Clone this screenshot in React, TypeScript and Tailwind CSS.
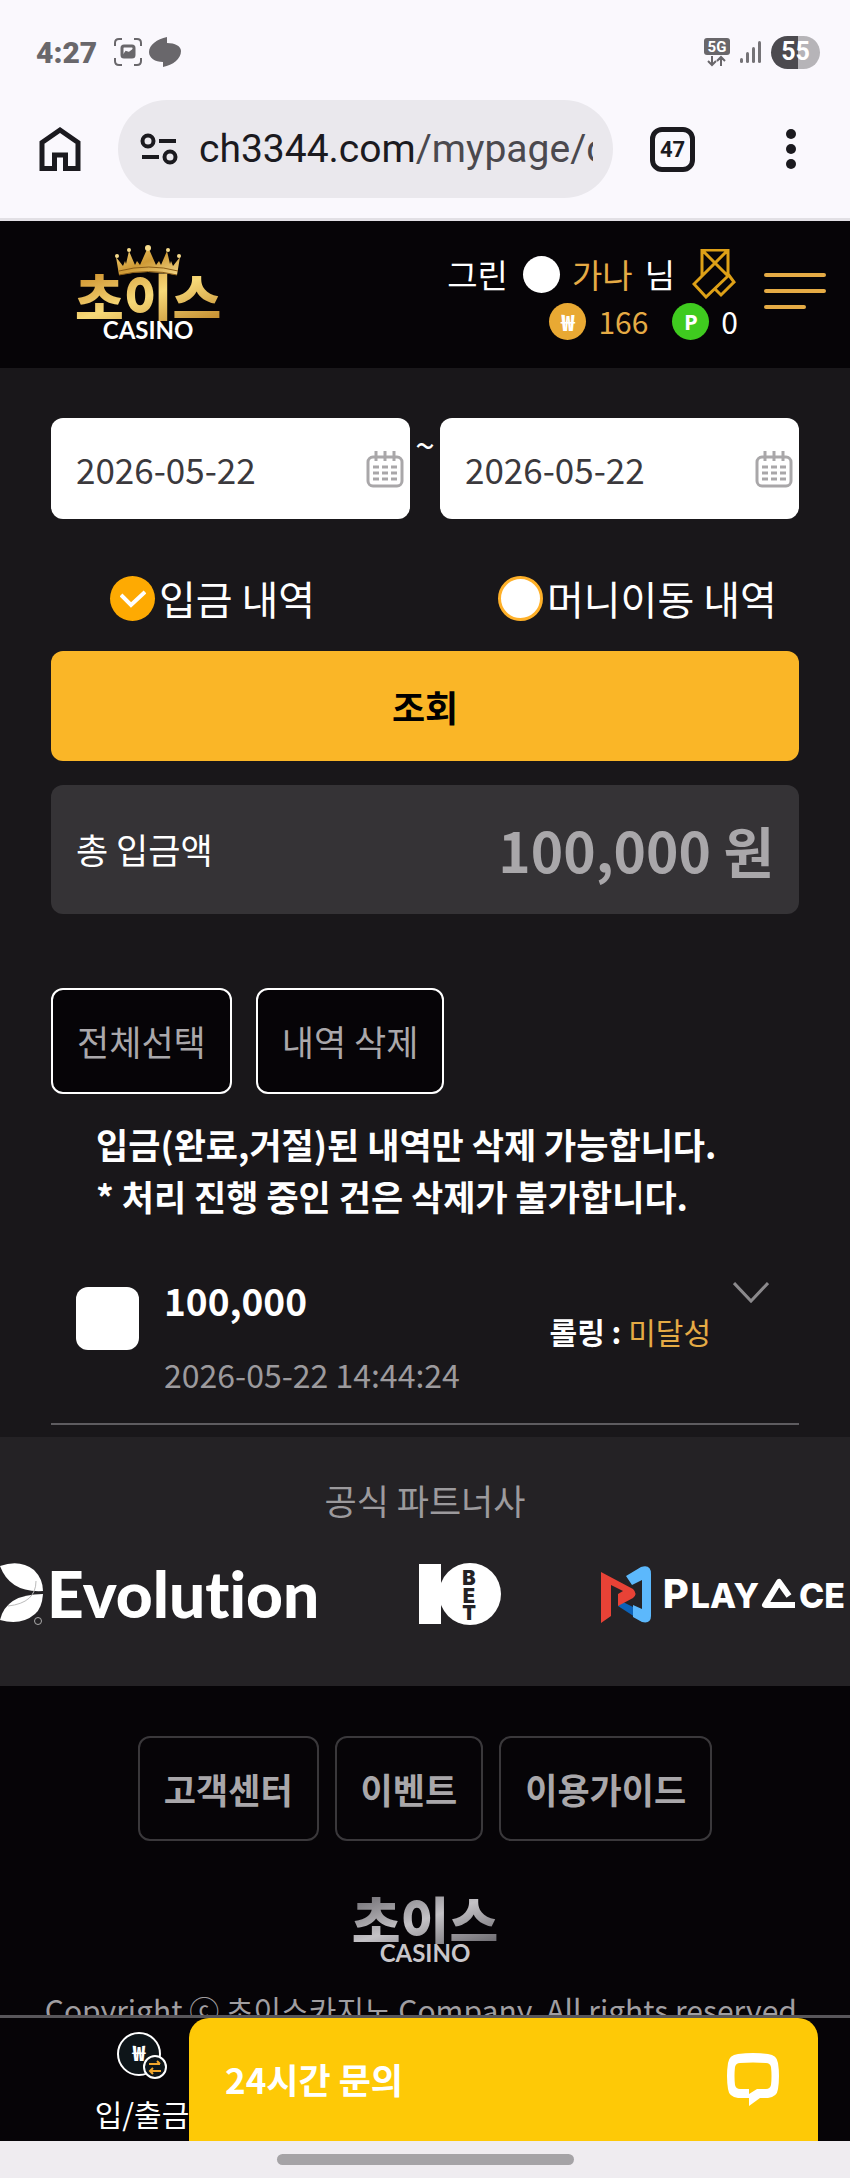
const bars = [5, 11, 16, 22]

function Wordmark({ tone }: { tone: "gold" | "silver" }) {
    const fill = tone === "gold"
        ? "bg-linear-to-br from-[#c98a1e] via-[#f7d978] to-[#c08a2a]"
        : "bg-linear-to-br from-[#6b696e] via-[#c4c2c6] to-[#69676c]"
    return (
        <span className="flex flex-col items-center">
            <span className={`bg-clip-text text-[53px] leading-[50px] font-black text-transparent ${fill}`}>초이스</span>
            <span className={tone === "gold"
                ? "font-[Lato] text-[24px] leading-[18px] font-bold text-white"
                : "font-[Lato] text-[24px] leading-[18px] font-bold text-[#c8c6ca]"}>CASINO</span>
        </span>
    )
}

function Crown() {
    return (
        <svg viewBox="0 0 66 34" className="absolute top-6 left-[115px] h-[34px] w-[66px]" aria-hidden="true">
            <defs>
                <linearGradient id="crown" x1="0" x2="1" y1="0" y2="1">
                    <stop offset="0" stopColor="#f6d67a" />
                    <stop offset=".5" stopColor="#cf9a35" />
                    <stop offset="1" stopColor="#f3d78a" />
                </linearGradient>
            </defs>
            <path d="M4 30 1 12l7 9 2-5 1 3 3-13 6 14 2-4 3 4 8-18 8 18 3-4 2 4 6-14 3 13 1-3 2 5 7-9-3 18q-30-6-58 0z" fill="url(#crown)" />
            <path d="M4 26q30-8 59 0M4 30q30-7 58 0" fill="none" stroke="#8a5c16" strokeWidth="1" />
            <g fill="#f7dc8c">
                <circle cx="2" cy="11" r="2" />
                <circle cx="14" cy="5" r="2" />
                <circle cx="33" cy="3" r="3" />
                <circle cx="53" cy="5" r="2" />
                <circle cx="64" cy="11" r="2" />
            </g>
        </svg>
    )
}

function BrowserChrome() {
    return (
        <div className="border-b-[3px] border-[#e2e0e5] bg-[#faf8fd] font-[Roboto]">
            <div className="flex h-[100px] items-center justify-between pt-1 pr-[30px] pl-9">
                <div className="flex items-center text-[#69676b]">
                    <span className="w-[63px] text-[30px] font-black">4:27</span>
                    <svg viewBox="0 0 28 28" className="ml-[15px] size-7" fill="none" stroke="currentColor" strokeWidth="2">
                        <path d="M1 8V5q0-4 4-4h3M20 1h3q4 0 4 4v3M27 20v3q0 4-4 4h-3M8 27H5q-4 0-4-4v-3" />
                        <rect x="8" y="8" width="12" height="11" rx="2" strokeWidth="3" />
                        <path d="m9 18 3-4 3 1 4-3v6z" fill="currentColor" />
                    </svg>
                    <svg viewBox="0 0 32 30" className="ml-[7px] h-[30px] w-8" fill="currentColor">
                        <path d="M18 0v6c8 0 14 3 14 8 0 8-8 14-18 16v-5C6 25 0 21 0 15 0 8 8 2 18 0z" />
                    </svg>
                </div>
                <div className="flex items-center text-[#69676b]">
                    <svg viewBox="0 0 26 29" className="h-[29px] w-[26px]">
                        <rect width="26" height="17" rx="3" fill="currentColor" />
                        <text x="13" y="14" textAnchor="middle" fontSize="15" fontWeight="700" fill="#fff">5G</text>
                        <path d="M8 18v9m-4-4 4 4 4-4M17 28v-9m-4 4 4-4 4 4" fill="none" stroke="currentColor" strokeWidth="2" />
                    </svg>
                    <div className="ml-[10px] flex h-[22px] items-end gap-[3px]">
                        {bars.map((h) => (
                            <span key={h} className="w-[3px] rounded-full bg-[#757377]" style={{ height: h }} />
                        ))}
                    </div>
                    <div className="ml-[10px] flex h-[33px] w-[49px] items-center justify-center rounded-full bg-linear-to-r from-[#4c4a4f] from-55% to-[#b6b4b8] to-55% text-[25px] font-bold text-white">55</div>
                </div>
            </div>
            <div className="flex items-center pb-5">
                <button className="ml-[39px]" aria-label="홈">
                    <svg viewBox="0 0 42 46" className="h-[46px] w-[42px]" fill="none" stroke="#1b1a1f" strokeWidth="5">
                        <path d="M3 42.500V16.500L21 4l18 12.500v26H26.500V29h-11v13.500z" />
                    </svg>
                </button>
                <div className="ml-[37px] flex h-[98px] min-w-0 flex-1 items-center rounded-full bg-[#eae8ed] pr-5 pl-[22px]">
                    <svg viewBox="0 0 38 32" className="h-8 w-[38px] shrink-0" fill="none" stroke="#1b1a1f" strokeWidth="4">
                        <circle cx="8" cy="8" r="5.500" />
                        <path d="M19 8h17M2 24h17" />
                        <circle cx="30" cy="24" r="5.500" />
                    </svg>
                    <span className="ml-[21px] min-w-0 flex-1 overflow-hidden text-[39px] leading-[52px] whitespace-nowrap text-[#1b1a1f]">
                        ch3344.com<span className="text-[#4b494e]">/mypage/c</span>
                    </span>
                </div>
                <button className="ml-[37px] flex size-[45px] items-center justify-center rounded-xl border-[5px] border-[#1b1a1f] text-[22px] font-bold text-[#1b1a1f]" aria-label="탭 47개">47</button>
                <button className="mr-[54px] ml-[91px] flex flex-col gap-[5px]" aria-label="메뉴">
                    <span className="size-[10px] rounded-full bg-[#1b1a1f]" />
                    <span className="size-[10px] rounded-full bg-[#1b1a1f]" />
                    <span className="size-[10px] rounded-full bg-[#1b1a1f]" />
                </button>
            </div>
        </div>
    )
}

function Header() {
    return (
        <header className="relative flex h-[147px] items-start justify-between bg-[#060407] pr-6 pl-[75px]">
            <a href="#home" className="pt-[50px]"><Wordmark tone="gold" /></a>
            <Crown />
            <div className="flex">
                <div className="flex flex-col items-end pt-7">
                    <div className="flex h-[50px] items-center text-[33px] leading-[50px] text-white">
                        그린
                        <span className="mr-3 ml-[15px] size-[37px] rounded-full bg-white" />
                        <span className="text-[#e5ab45]">가나</span>
                        <span className="ml-3">님</span>
                        <svg viewBox="0 0 44 50" className="ml-[17px] h-[50px] w-11" fill="none" stroke="#dda017" strokeWidth="3">
                            <path d="M10 27V1h26v25M10 1l26 26M36 1 2 35l12 13 22-21M36 25l6 8-13 13-7-7" />
                        </svg>
                    </div>
                    <div className="flex items-center text-[30px] leading-[44px] text-white">
                        <span className="flex size-[37px] items-center justify-center rounded-full bg-[#e9a933] text-[22px] font-black">₩</span>
                        <span className="ml-3 text-[#e5ab45]">166</span>
                        <span className="ml-6 flex size-[37px] items-center justify-center rounded-full bg-[#3fcb1f] font-['Open_Sans'] text-[22px] font-bold">P</span>
                        <span className="mr-[-2px] ml-3">0</span>
                    </div>
                </div>
                <button className="mt-[52px] ml-7 flex w-[62px] flex-col gap-3" aria-label="전체 메뉴">
                    <span className="h-1 w-full rounded-full bg-[#e5ab45]" />
                    <span className="h-1 w-full rounded-full bg-[#e5ab45]" />
                    <span className="h-1 w-[42px] rounded-full bg-[#e5ab45]" />
                </button>
            </div>
        </header>
    )
}

function DateField({ label }: { label: string }) {
    return (
        <label className="flex h-[101px] min-w-0 flex-1 items-center rounded-xl bg-white pr-[6px] pl-[25px]">
            <input aria-label={label} defaultValue="2026-05-22" className="min-w-0 flex-1 text-[35px] leading-[50px] text-[#3b393d] outline-none" />
            <svg viewBox="0 0 38 38" className="size-[38px] shrink-0" fill="none" stroke="#a9a7a9" strokeWidth="3">
                <rect x="2" y="7" width="34" height="29" rx="5" />
                <path d="M10 1v10M19 1v10M28 1v10" />
                <path d="M7 17h6m3 0h6m3 0h6M7 23h6m3 0h6m3 0h6M7 29h6m3 0h6m3 0h6" />
            </svg>
        </label>
    )
}

function History() {
    return (
        <main className="bg-[#19171a] px-[51px] pt-[50px] pb-3">
            <div className="flex">
                <DateField label="시작일" />
                <span className="w-[30px] text-center text-[35px] leading-[52px]">~</span>
                <DateField label="종료일" />
            </div>
            <div className="mt-[50px] grid grid-cols-2 text-[40px] leading-[58px]">
                <label className="flex items-center gap-1 pl-[59px]">
                    <input type="radio" name="kind" defaultChecked className="sr-only" />
                    <span className="flex size-[45px] items-center justify-center rounded-full bg-[#feaa02]">
                        <svg viewBox="0 0 26 20" className="h-5 w-[26px]" fill="none" stroke="#fff" strokeWidth="4">
                            <path d="m1 7 10 10L25 4" />
                        </svg>
                    </span>
                    입금 내역
                </label>
                <label className="flex items-center gap-1 pl-[73px] whitespace-nowrap">
                    <input type="radio" name="kind" className="sr-only" />
                    <span className="size-[45px] rounded-full border-[3px] border-[#feb029] bg-white" />
                    머니이동 내역
                </label>
            </div>
            <button className="mt-6 h-[110px] w-full rounded-xl bg-[#fab627] text-[36px] font-bold text-black">조회</button>
            <div className="mt-6 flex h-[129px] items-center justify-between rounded-xl bg-[#353336] px-[25px]">
                <span className="text-[35px]">총 입금액</span>
                <strong className="text-[55px] font-bold text-[#a9a7aa]">100,000 원</strong>
            </div>
            <div className="mt-[74px] flex gap-6 text-[35px] leading-[50px] text-[#aaa8ab]">
                <button className="h-[106px] rounded-xl border-2 border-white bg-[#060407] px-6">전체선택</button>
                <button className="h-[106px] rounded-xl border-2 border-white bg-[#060407] px-6">내역 삭제</button>
            </div>
            <p className="mt-6 pl-[45px] text-[35px] leading-[52px] font-bold">
                입금(완료,거절)된 내역만 삭제 가능합니다.<br />* 처리 진행 중인 건은 삭제가 불가합니다.
            </p>
            <div className="mt-[50px] flex h-[153px] border-b-2 border-[#5e5c60] pr-[30px] pl-[25px]">
                <input type="checkbox" aria-label="100,000 선택" className="mt-[15px] size-[63px] appearance-none rounded-xl bg-white" />
                <div className="ml-[25px] flex-1">
                    <div className="text-[37px] leading-[56px] font-bold">100,000</div>
                    <time className="block pt-4 text-[32px] leading-[60px] text-[#9c9a9d]">2026-05-22 14:44:24</time>
                </div>
                <div className="pt-9 text-[30px] leading-[46px]">
                    <b>롤링 : </b><span className="text-[#e5ab45]">미달성</span>
                </div>
                <svg viewBox="0 0 36 22" className="mt-[10px] ml-[22px] h-[22px] w-9" fill="none" stroke="#8b898c" strokeWidth="3">
                    <path d="m1 1 17 18L35 1" />
                </svg>
            </div>
        </main>
    )
}

function Partners() {
    return (
        <section className="overflow-hidden bg-[#242225] pt-[38px] pb-[61px]">
            <h2 className="text-center text-[35px] leading-[50px] text-[#9c9a9d]">공식 파트너사</h2>
            <div className="mt-[38px] flex h-[62px] items-center justify-between pr-[5px]">
                <div className="flex items-center">
                    <svg viewBox="0 0 43 62" className="h-[62px] w-[43px]">
                        <path d="M0 3Q20-4 34 7q9 9 9 21Q10 30 0 3z" fill="#fff" />
                        <path d="M43 31q-1 14-8 20Q21 63 0 57 6 31 43 31z" fill="#fff" />
                        <path d="M36 18q0 22-28 25" fill="none" stroke="#bbb" strokeWidth="1" />
                        <circle cx="38" cy="58" r="3.500" fill="none" stroke="#aaa" />
                    </svg>
                    <span className="ml-1 font-[Lato] text-[64px] leading-[62px] font-black [font-variant-ligatures:none]">Evolution</span>
                </div>
                <svg viewBox="0 0 82 62" className="h-[62px] w-[82px] font-[Inter]">
                    <rect y="1" width="22" height="60" fill="#fff" />
                    <circle cx="51" cy="31" r="31" fill="#fff" />
                    <g fontSize="20" fontWeight="900" textAnchor="middle" fill="#242225">
                        <text x="50" y="22">B</text>
                        <text x="50" y="40">E</text>
                        <text x="50" y="57">T</text>
                    </g>
                </svg>
                <div className="flex items-center">
                    <svg viewBox="0 0 50 57" className="h-[57px] w-[50px]">
                        <path d="M17 40l17 11v-9l-12-6z" fill="#0c62b8" />
                        <path d="M25 10 40 1q10-3 10 7v42q0 8-9 6l-9-5V39l9 4V14l-10 5z" fill="#5cb8fc" />
                        <path d="M0 6l32 17q5 5 0 9L17 40V28l5-3-12-6v31L0 57z" fill="#e84236" />
                    </svg>
                    <span className="ml-3 flex items-baseline gap-0.5 font-[Inter] text-[34px] font-extrabold">
                        <span className="text-[40px]">P</span>
                        <span>LAY</span>
                        <svg viewBox="0 0 36 30" className="h-[30px] w-9" fill="none" stroke="#fff" strokeWidth="6" strokeLinejoin="round">
                            <path d="m28 18-10-14L4 27h30" />
                        </svg>
                        <span>CE</span>
                    </span>
                </div>
            </div>
        </section>
    )
}

function Footer() {
    return (
        <footer className="flex flex-1 flex-col items-center bg-[#060407] pt-[50px]">
            <div className="flex gap-4 text-[35px] leading-[50px] font-bold text-[#a9a7aa]">
                <a href="#help" className="flex h-[105px] items-center rounded-xl border-2 border-[#3a383b] px-6">고객센터</a>
                <a href="#event" className="flex h-[105px] items-center rounded-xl border-2 border-[#3a383b] px-6">이벤트</a>
                <a href="#guide" className="flex h-[105px] items-center rounded-xl border-2 border-[#3a383b] px-6">이용가이드</a>
            </div>
            <div className="mt-[53px]"><Wordmark tone="silver" /></div>
            <p className="mt-6 text-[30px] leading-[46px] whitespace-nowrap text-[#a09ea1]">Copyright ⓒ 초이스카지노 Company. All rights reserved.</p>
        </footer>
    )
}

function BottomNav() {
    return (
        <div className="fixed inset-x-0 bottom-0">
            <nav className="relative h-[126px] border-t-[3px] border-[#58565a] bg-[#060407]">
                <a href="#cash" className="flex w-[284px] flex-col items-center pt-[14px]">
                    <svg viewBox="0 0 50 48" className="h-12 w-[50px]" fill="#0e1519" stroke="#fff" strokeWidth="2">
                        <circle cx="22" cy="22" r="21" />
                        <text x="22" y="29" textAnchor="middle" fontSize="21" fontWeight="900" fill="#fff" stroke="none">₩</text>
                        <circle cx="38" cy="35" r="11" />
                        <path d="M32 32h11m-3-3 3 3M44 39H33m3-3-3 3 3 3" fill="none" stroke="#f0a52c" />
                    </svg>
                    <span className="pt-[10px] text-[30px] leading-[46px]">입/출금</span>
                </a>
                <button className="absolute top-0 right-8 bottom-0 left-[189px] flex items-center justify-between rounded-t-[20px] bg-[#fec906] pr-[38px] pl-9 text-[35px] font-bold">
                    24시간 문의
                    <svg viewBox="0 0 54 54" className="h-[54px] w-[54px]">
                        <path fillRule="evenodd" fill="#fff" d="M12 1q15-2 30 0 9 1 10 9 2 13 0 26-1 8-10 9h-8L23 53v-8H12q-9-1-10-9-2-13 0-26 1-8 10-9zm2 9q-4 0-5 4-1 9 0 18 1 4 5 4h9l0 5 8-5h9q4 0 5-4 1-9 0-18-1-4-5-4-13-1-26 0z" />
                    </svg>
                </button>
            </nav>
            <div className="flex h-[37px] items-center justify-center bg-[#efecf0]">
                <span className="h-[11px] w-[297px] rounded-full bg-[#a5a3a6]" />
            </div>
        </div>
    )
}

export default function App() {
    return (
        <div className="flex min-h-screen flex-col bg-[#060407] font-['Noto_Sans_CJK_KR',sans-serif] text-white">
            <BrowserChrome />
            <Header />
            <History />
            <Partners />
            <Footer />
            <BottomNav />
        </div>
    )
}
